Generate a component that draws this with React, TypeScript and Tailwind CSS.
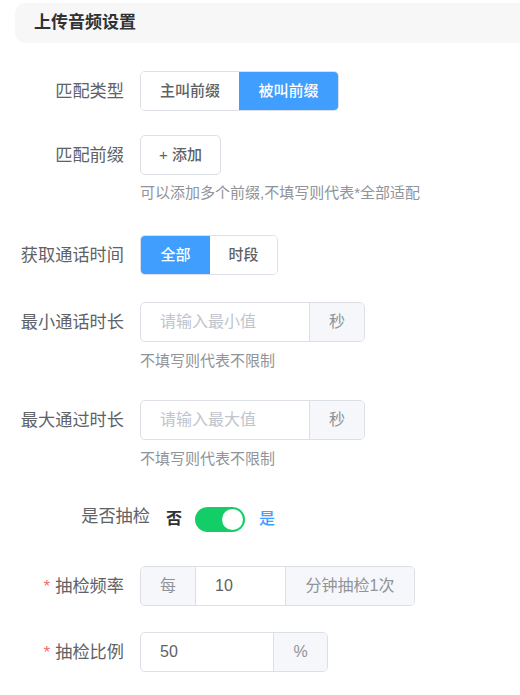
import type { ReactNode } from "react";

const font = "font-['Liberation_Sans','Noto_Sans_CJK_SC',sans-serif]";

function Label({ children, required }: { children: ReactNode; required?: boolean }) {
  return (
    <div className="w-[140px] shrink-0 pr-[16px] text-right text-[17.2px] leading-[40px] text-[#606266]">
      {required && <span className="mr-[5px] text-[#f56c6c]">*</span>}
      {children}
    </div>
  );
}

function Hint({ children, className }: { children: ReactNode; className: string }) {
  return (
    <div className={`pl-[140px] text-[15px] leading-[20px] text-[#909399] ${className}`}>
      {children}
    </div>
  );
}

function Addon({ children, width, left }: { children: ReactNode; width: string; left?: boolean }) {
  return (
    <div
      className={`flex h-full items-center justify-center bg-[#f5f7fa] text-[16px] text-[#909399] ${width} ${
        left ? "border-r border-[#dcdfe6]" : "border-l border-[#dcdfe6]"
      }`}
    >
      {children}
    </div>
  );
}

export default function App() {
  return (
    <div className={`h-[695px] w-[520px] overflow-hidden bg-white ${font}`}>
      {/* section header */}
      <div className="mr-[-12px] ml-[15px] mt-[3px] flex h-[40px] items-center rounded-l-[10px] bg-[#f7f7f7] pl-[19px] text-[17px] font-bold text-[#303133]">
        上传音频设置
      </div>

      {/* 匹配类型 */}
      <div className="mt-[28px] flex h-[40px]">
        <Label>匹配类型</Label>
        <div className="flex h-[40px] overflow-hidden rounded-[5px] border border-[#dcdfe6] text-[15px] font-medium">
          <div className="flex w-[98px] items-center justify-center bg-white text-[#606266]">主叫前缀</div>
          <div className="flex w-[99px] items-center justify-center bg-[#409eff] text-white">被叫前缀</div>
        </div>
      </div>

      {/* 匹配前缀 */}
      <div className="mt-[24px] flex h-[40px]">
        <Label>匹配前缀</Label>
        <button className="flex h-[40px] w-[81px] items-center justify-center rounded-[5px] border border-[#dcdfe6] bg-white text-[15px] font-medium text-[#606266]">
          + 添加
        </button>
      </div>
      <Hint className="mt-[8px]">可以添加多个前缀,不填写则代表*全部适配</Hint>

      {/* 获取通话时间 */}
      <div className="mt-[32px] flex h-[40px]">
        <Label>获取通话时间</Label>
        <div className="flex h-[40px] overflow-hidden rounded-[5px] border border-[#dcdfe6] text-[15px] font-medium">
          <div className="flex w-[69px] items-center justify-center bg-[#409eff] text-white">全部</div>
          <div className="flex w-[67px] items-center justify-center bg-white text-[#606266]">时段</div>
        </div>
      </div>

      {/* 最小通话时长 */}
      <div className="mt-[27px] flex h-[40px]">
        <Label>最小通话时长</Label>
        <div className="flex h-[40px] overflow-hidden rounded-[5px] border border-[#dcdfe6]">
          <input
            placeholder="请输入最小值"
            className="h-full w-[168px] pl-[19px] text-[16px] text-[#606266] outline-none placeholder:text-[#c0c4cc]"
          />
          <Addon width="w-[55px]">秒</Addon>
        </div>
      </div>
      <Hint className="mt-[9px]">不填写则代表不限制</Hint>

      {/* 最大通过时长 */}
      <div className="mt-[29px] flex h-[40px]">
        <Label>最大通过时长</Label>
        <div className="flex h-[40px] overflow-hidden rounded-[5px] border border-[#dcdfe6]">
          <input
            placeholder="请输入最大值"
            className="h-full w-[168px] pl-[19px] text-[16px] text-[#606266] outline-none placeholder:text-[#c0c4cc]"
          />
          <Addon width="w-[55px]">秒</Addon>
        </div>
      </div>
      <Hint className="mt-[9px]">不填写则代表不限制</Hint>

      {/* 是否抽检 */}
      <div className="mt-[30px] flex items-start">
        <div className="w-[150px] shrink-0 text-right text-[17.2px] leading-[34px] text-[#606266]">是否抽检</div>
        <div className="ml-[16px] flex h-[40px] items-center">
          <span className="text-[16px] font-bold text-[#303133]">否</span>
          <div className="ml-[13px] flex h-[25px] w-[50px] items-center justify-end rounded-full bg-[#13ce66] pr-[2px]">
            <div className="h-[21px] w-[21px] rounded-full bg-white" />
          </div>
          <span className="ml-[14px] text-[16px] font-medium text-[#409eff]">是</span>
        </div>
      </div>

      {/* 抽检频率 */}
      <div className="mt-[27px] flex h-[40px]">
        <Label required>抽检频率</Label>
        <div className="flex h-[40px] overflow-hidden rounded-[5px] border border-[#dcdfe6]">
          <Addon width="w-[55px]" left>
            每
          </Addon>
          <input
            defaultValue="10"
            className="h-full w-[89px] pl-[19px] text-[16px] text-[#606266] outline-none"
          />
          <Addon width="w-[129px]">分钟抽检1次</Addon>
        </div>
      </div>

      {/* 抽检比例 */}
      <div className="mt-[26px] flex h-[40px]">
        <Label required>抽检比例</Label>
        <div className="flex h-[40px] overflow-hidden rounded-[5px] border border-[#dcdfe6]">
          <input
            defaultValue="50"
            className="h-full w-[132px] pl-[19px] text-[16px] text-[#606266] outline-none"
          />
          <Addon width="w-[54px]">%</Addon>
        </div>
      </div>
    </div>
  );
}
